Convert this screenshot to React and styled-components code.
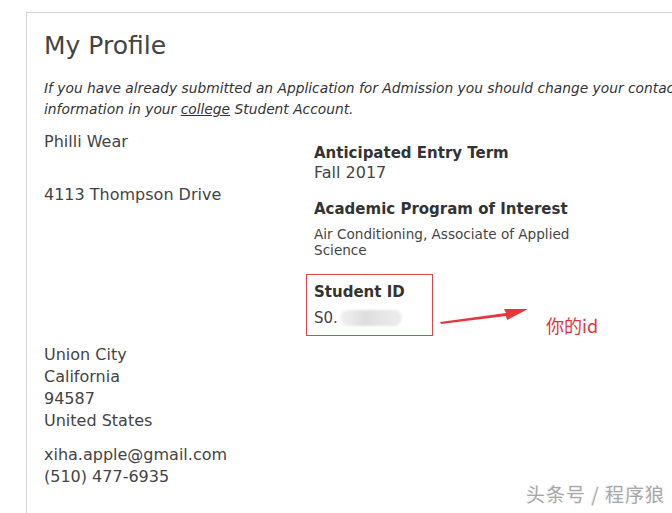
import React from 'react';
import styled, { createGlobalStyle } from 'styled-components';

const Global = createGlobalStyle`
body {
  margin: 0;
  background: #fff;
  font-family: "DejaVu Sans", Verdana, sans-serif;
  color: #444;
  overflow: hidden;
}
`

const Page = styled.div`
position: relative;
width: 672px;
height: 513px;
overflow: hidden;
padding: 12px 0 0 26px;
box-sizing: border-box;
`

const Card = styled.div`
width: 720px;
min-height: 520px;
border-top: 1px solid #d4d4d4;
border-left: 1px solid #d4d4d4;
padding: 17px 0 0 17px;
box-sizing: border-box;
`

const Title = styled.h1`
margin: 0;
font-size: 25px;
font-weight: normal;
color: #444;
line-height: 32px;
`

const Note = styled.p`
margin: 16px 0 0;
font-size: 13.8px;
font-style: italic;
line-height: 21px;
color: #333;
white-space: nowrap;

a {
  color: #333;
  text-decoration: underline;
}
`

const Columns = styled.div`
display: flex;
margin-top: 11px;
`

const LeftCol = styled.div`
width: 270px;
`

const RightCol = styled.div`
padding-top: 12px;
width: 270px;
`

const Line = styled.div`
font-size: 16px;
line-height: 22px;
color: #444;
margin-bottom: ${p => p.$gap || 0}px;
`

const Field = styled.div`
margin-bottom: 16px;
`

const Label = styled.div`
font-weight: bold;
font-size: 15px;
line-height: 20px;
color: #333;
`

const Value = styled.div`
font-size: ${p => p.$small ? 13.6 : 16}px;
line-height: ${p => p.$small ? 16 : 20}px;
color: #444;
margin-top: ${p => p.$small ? 7 : 0}px;
`

const IdBox = styled.div`
width: 127px;
height: 62px;
margin-left: -8px;
border: 1px solid #d9474c;
box-sizing: border-box;
padding: 7px 0 0 7px;
`

const IdValue = styled.div`
display: flex;
align-items: center;
margin-top: 7px;
font-size: 15px;
color: #444;
`

const Blur = styled.span`
display: inline-block;
width: 62px;
height: 16px;
margin-left: 2px;
border-radius: 8px;
background: linear-gradient(90deg, #f2f2f2, #dedede 40%, #e6e6e6 70%, #ececec);
filter: blur(1px);
`

const Annotation = styled.div`
position: absolute;
left: 440px;
top: 302px;
display: flex;
align-items: flex-start;
`

const Mark = styled.span`
margin: 10px 0 0 16px;
font-family: "Noto Sans CJK SC", sans-serif;
font-size: 18px;
color: #e0383f;
`

const Bottom = styled.div`
margin-top: 8px;
`

const Watermark = styled.div`
position: absolute;
right: 7px;
bottom: 6px;
font-family: "Noto Sans CJK SC", sans-serif;
font-size: 19px;
letter-spacing: 1px;
color: #a8a8a8;
text-shadow: 1px 1px 0 #fff, -1px -1px 0 #f0f0f0;
`

const Arrow = () => (
  <svg width="90" height="24" viewBox="0 0 90 24">
    <polygon points="0,20 66,11 64,7 88,7 67,18 66,14 1,22" fill="#e8343a" />
  </svg>
)

export default function App() {
  return (
    <Page>
      <Global />
      <Card>
        <Title>My Profile</Title>
        <Note>
          If you have already submitted an Application for Admission you should change your contact<br />
          information in your <a>college</a> Student Account.
        </Note>
        <Columns>
          <LeftCol>
            <Line $gap={31}>Philli Wear</Line>
            <Line>4113 Thompson Drive</Line>
          </LeftCol>
          <RightCol>
            <Field>
              <Label>Anticipated Entry Term</Label>
              <Value>Fall 2017</Value>
            </Field>
            <Field>
              <Label>Academic Program of Interest</Label>
              <Value $small>Air Conditioning, Associate of Applied Science</Value>
            </Field>
            <IdBox>
              <Label>Student ID</Label>
              <IdValue>S0.<Blur /></IdValue>
            </IdBox>
          </RightCol>
        </Columns>
        <Bottom>
          <Line>Union City</Line>
          <Line>California</Line>
          <Line>94587</Line>
          <Line $gap={12}>United States</Line>
          <Line>xiha.apple@gmail.com</Line>
          <Line>(510) 477-6935</Line>
        </Bottom>
      </Card>
      <Annotation>
        <Arrow />
        <Mark>你的id</Mark>
      </Annotation>
      <Watermark>头条号 / 程序狼</Watermark>
    </Page>
  );
}
